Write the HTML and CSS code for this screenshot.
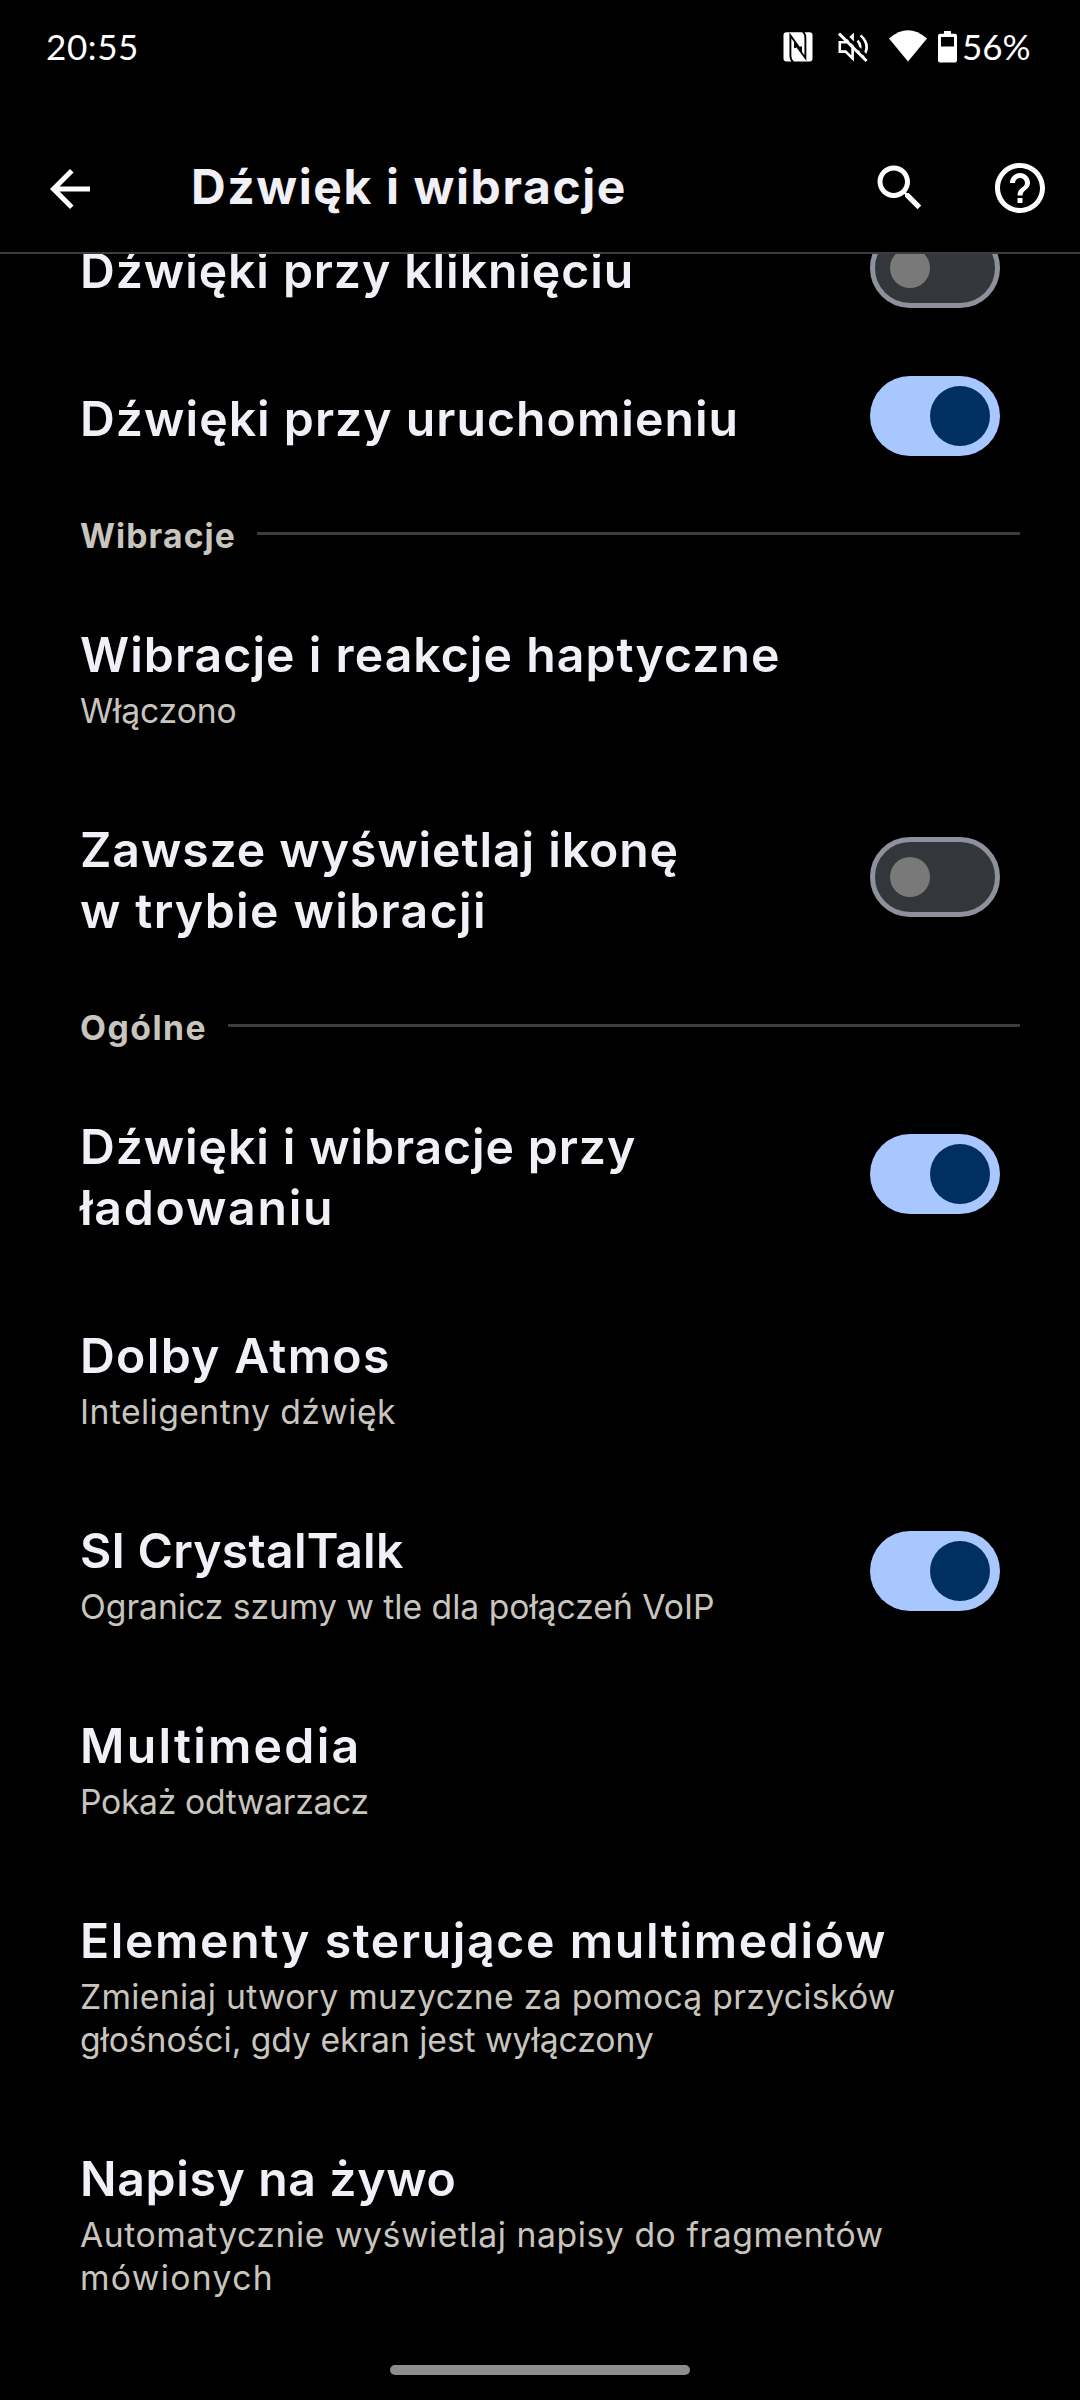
FILE: index.html
```html
<!DOCTYPE html>
<html lang="pl">
<head>
<meta charset="utf-8">
<title>Dźwięk i wibracje</title>
<link rel="stylesheet" href="styles.css">
</head>
<body>
<div class="screen">
  <header class="status-bar">
    <span class="clock">20:55</span>
    <svg class="nfc" width="30" height="30" viewBox="0 0 30 30">
      <rect x=".5" y=".3" width="29" height="29.3" rx="3" fill="#fff"/>
      <path d="M10.500 30.5C8 28.600 7.400 27 7.400 24V3.5L18 18V14.500M19.500-1C22 1.400 22.400 3.200 22.400 6V26L12 12V16" fill="none" stroke="#000" stroke-width="1.900"/>
    </svg>
    <svg class="mute" width="31" height="30" viewBox="0 0 31 30">
      <g fill="none" stroke="#fff" stroke-width="2.6">
        <path d="M1.8 10.2V19.6H7.6L14.6 26.4V3.6L7.9 10.2Z"/>
        <path d="M19.6 8.6Q24.6 14.2 20.4 20.4M22.6 3.4Q33.6 13.6 24.6 25"/>
      </g>
      <path d="M3.6-.6L32 27.6" stroke="#000" stroke-width="3"/>
      <path d="M1 1.6L28.6 29" stroke="#fff" stroke-width="2.9"/>
    </svg>
    <svg class="wifi" width="38" height="32" viewBox="0 0 38 32">
      <path d="M0 8.6Q19-8 38 8.6L19 31.4Z" fill="#fff"/>
    </svg>
    <svg class="battery" width="19" height="32" viewBox="0 0 19 32">
      <path d="M6 0h7v2.7h4a2 2 0 0 1 2 2V29.500a2 2 0 0 1-2 2H2a2 2 0 0 1-2-2V4.700a2 2 0 0 1 2-2h4zM3 6v9.500h13V6z" fill="#fff" fill-rule="evenodd"/>
    </svg>
    <span class="percent">56%</span>
  </header>

  <div class="app-bar">
    <svg class="icon back" viewBox="0 0 24 24"><path d="M20 11H7.830l5.590-5.590L12 4l-8 8 8 8 1.410-1.410L7.830 13H20v-2z"/></svg>
    <h1 class="app-title">Dźwięk i wibracje</h1>
    <svg class="icon" viewBox="0 0 24 24"><path d="M15.500 14h-.790l-.280-.270C15.410 12.590 16 11.110 16 9.500 16 5.910 13.090 3 9.500 3S3 5.910 3 9.500 5.910 16 9.500 16c1.610 0 3.090-.590 4.230-1.570l.270.280v.790l5 4.990L20.490 19l-4.990-5zm-6 0C7.010 14 5 11.990 5 9.500S7.010 5 9.500 5 14 7.010 14 9.500 11.990 14 9.500 14z"/></svg>
    <svg class="icon" viewBox="0 0 24 24"><path d="M11 18h2v-2h-2v2zm1-16C6.480 2 2 6.480 2 12s4.480 10 10 10 10-4.480 10-10S17.520 2 12 2zm0 18c-4.410 0-8-3.590-8-8s3.590-8 8-8 8 3.590 8 8-3.590 8-8 8zm0-14c-2.210 0-4 1.790-4 4h2c0-1.100.900-2 2-2s2 .900 2 2c0 2-3 1.750-3 5h2c0-2.250 3-2.500 3-5 0-2.210-1.790-4-4-4z"/></svg>
  </div>

  <main class="viewport">
    <div class="list">
      <div class="item">
        <div class="label"><div class="title t-click">Dźwięki przy kliknięciu</div></div>
        <div class="switch"><div class="knob"></div></div>
      </div>
      <div class="item">
        <div class="label"><div class="title t-boot">Dźwięki przy uruchomieniu</div></div>
        <div class="switch on"><div class="knob"></div></div>
      </div>

      <div class="category"><span class="category-name c-vib">Wibracje</span><span class="rule"></span></div>

      <div class="item">
        <div class="label">
          <div class="title t-haptic">Wibracje i reakcje haptyczne</div>
          <div class="summary s-on">Włączono</div>
        </div>
      </div>
      <div class="item">
        <div class="label"><div class="title"><span class="t-icon">Zawsze wyświetlaj ikonę</span><br><span class="t-mode">w trybie wibracji</span></div></div>
        <div class="switch"><div class="knob"></div></div>
      </div>

      <div class="category"><span class="category-name c-general">Ogólne</span><span class="rule"></span></div>

      <div class="item">
        <div class="label"><div class="title"><span class="t-charge">Dźwięki i wibracje przy</span><br><span class="t-charge2">ładowaniu</span></div></div>
        <div class="switch on"><div class="knob"></div></div>
      </div>
      <div class="item">
        <div class="label">
          <div class="title t-dolby">Dolby Atmos</div>
          <div class="summary s-dolby">Inteligentny dźwięk</div>
        </div>
      </div>
      <div class="item">
        <div class="label">
          <div class="title t-crystal">SI CrystalTalk</div>
          <div class="summary s-crystal">Ogranicz szumy w tle dla połączeń VoIP</div>
        </div>
        <div class="switch on"><div class="knob"></div></div>
      </div>
      <div class="item">
        <div class="label">
          <div class="title t-media">Multimedia</div>
          <div class="summary s-media">Pokaż odtwarzacz</div>
        </div>
      </div>
      <div class="item">
        <div class="label">
          <div class="title t-controls">Elementy sterujące multimediów</div>
          <div class="summary"><span class="s-controls">Zmieniaj utwory muzyczne za pomocą przycisków</span><br><span class="s-controls2">głośności, gdy ekran jest wyłączony</span></div>
        </div>
      </div>
      <div class="item">
        <div class="label">
          <div class="title t-live">Napisy na żywo</div>
          <div class="summary"><span class="s-live">Automatycznie wyświetlaj napisy do fragmentów</span><br><span class="s-live2">mówionych</span></div>
        </div>
      </div>
    </div>
  </main>
  <div class="home-handle"></div>
</div>
</body>
</html>
```
FILE: styles.css
```css
* { box-sizing: border-box; }

body {
  margin: 0;
  background: #000;
  color: #f0f0f6;
  font-family: Inter, "Liberation Sans", sans-serif;
}

.screen {
  position: relative;
  display: flex;
  flex-direction: column;
  width: 1080px;
  height: 2400px;
  overflow: hidden;
  background: #000;
}

/* Status bar */
.status-bar {
  display: flex;
  align-items: flex-start;
  height: 93px;
  flex: none;
  padding: 0 49px 0 46px;
  font: 400 35px/93px Lato, sans-serif;
  color: #fff;
}
.status-bar svg { flex: none; display: block; }
.clock { letter-spacing: .6px; margin-right: auto; }
.nfc { margin: 32px 25px 0 0; }
.mute { margin: 32px 20px 0 0; }
.wifi { margin: 30px 11px 0 0; }
.battery { margin: 31px 5px 0 0; }
.percent { width: 69px; letter-spacing: -.1px; white-space: nowrap; }

/* App bar */
.app-bar {
  display: flex;
  align-items: center;
  flex: none;
  height: 161px;
  padding: 31px 30px 0 40px;
  border-bottom: 2px solid #3c3c43;
  gap: 60px;
}
.icon { width: 60px; height: 60px; flex: none; fill: #fff; }
.back { position: relative; top: 1px; }
.app-title {
  flex: 1;
  margin: 0 0 4px 31px;
  font-size: 48px;
  font-weight: 700;
  line-height: 61px;
  letter-spacing: 1.6px;
  white-space: nowrap;
}

/* Scrolled list */
.viewport { flex: 1; overflow: hidden; }
.list { margin-top: -57px; }

.item {
  display: flex;
  align-items: center;
  justify-content: space-between;
  padding: 43px 80px 44px;
}
.label { white-space: nowrap; }
.title { font-size: 48.150px; font-weight: 600; line-height: 61px; }
.summary {
  margin-top: 4px;
  font-size: 33.700px;
  line-height: 43px;
  color: #c8c5be;
}

.category {
  display: flex;
  align-items: flex-start;
  height: 88px;
  padding: 0 60px 0 80px;
}
.category-name {
  margin-right: 21px;
  font-size: 33.700px;
  font-weight: 700;
  line-height: 85px;
  color: #c8c5be;
}
.rule { flex: 1; height: 3px; margin-top: 39px; background: #3c3c43; }

/* Switches */
.switch {
  display: flex;
  align-items: center;
  flex: none;
  width: 130px;
  height: 80px;
  margin: -20px 0 -14px;
  padding: 0 15px;
  border: 5px solid #8e919b;
  border-radius: 40px;
  background: #33363b;
}
.knob { width: 40px; height: 40px; border-radius: 50%; background: #797979; }
.switch.on {
  justify-content: flex-end;
  padding: 0 10px;
  border: 0;
  background: #a8c7ff;
}
.switch.on .knob { width: 60px; height: 60px; background: #003061; }

/* Tracking of individual lines */
.t-click { letter-spacing: .910px; }
.t-boot { letter-spacing: 1.030px; }
.t-haptic { letter-spacing: 1.050px; }
.t-icon { letter-spacing: .920px; }
.t-mode { letter-spacing: 1.370px; }
.t-charge { letter-spacing: .890px; }
.t-charge2 { letter-spacing: 1.770px; }
.t-dolby { letter-spacing: 1.320px; }
.t-crystal { letter-spacing: .240px; }
.t-media { letter-spacing: 2.250px; }
.t-controls { letter-spacing: 1.630px; }
.t-live { letter-spacing: .640px; }
.c-vib { letter-spacing: 1.100px; }
.c-general { letter-spacing: 1.500px; }
.s-on { letter-spacing: -.100px; }
.s-dolby { letter-spacing: .430px; }
.s-crystal { letter-spacing: -.020px; }
.s-media { letter-spacing: -.320px; }
.s-controls { letter-spacing: .310px; }
.s-controls2 { letter-spacing: -.050px; }
.s-live { letter-spacing: .570px; }
.s-live2 { letter-spacing: 1.350px; }

.home-handle {
  position: absolute;
  left: 390px;
  top: 2365px;
  width: 300px;
  height: 10px;
  border-radius: 5px;
  background: #8e8e8e;
}
```
